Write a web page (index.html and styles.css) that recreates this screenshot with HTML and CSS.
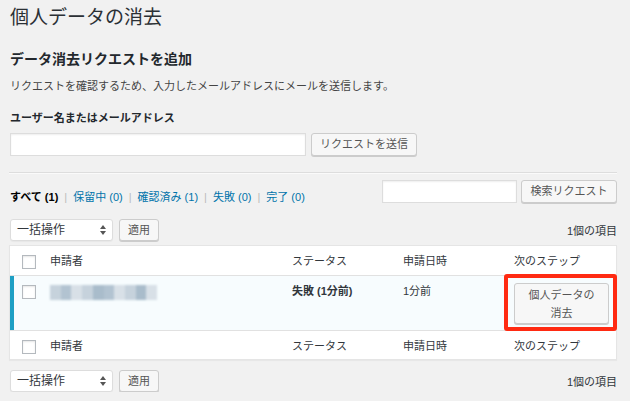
FILE: index.html
```
<!DOCTYPE html>
<html lang="ja">
<head>
<meta charset="utf-8">
<title>個人データの消去</title>
<link rel="stylesheet" href="styles.css">
</head>
<body>
<div class="wrap">
  <h1 class="title">個人データの消去</h1>
  <h2 class="subtitle">データ消去リクエストを追加</h2>
  <p class="desc">リクエストを確認するため、入力したメールアドレスにメールを送信します。</p>
  <div class="label">ユーザー名またはメールアドレス</div>
  <div class="add-row">
    <div class="text-input input-email"></div>
    <button class="btn">リクエストを送信</button>
  </div>
  <div class="sep"></div>
  <div class="filter-row">
    <ul class="subsubsub">
      <li><span class="current">すべて <span class="cnt">(1)</span></span></li>
      <li class="bar">|</li>
      <li><a>保留中 <span class="cnt">(0)</span></a></li>
      <li class="bar">|</li>
      <li><a>確認済み <span class="cnt">(1)</span></a></li>
      <li class="bar">|</li>
      <li><a>失敗 <span class="cnt">(0)</span></a></li>
      <li class="bar">|</li>
      <li><a>完了 <span class="cnt">(0)</span></a></li>
    </ul>
    <div class="search-box">
      <div class="text-input input-search"></div>
      <button class="btn btn-search">検索リクエスト</button>
    </div>
  </div>
  <div class="tablenav tablenav-top">
    <div class="actions">
      <div class="select">一括操作<svg class="arrows" width="6" height="10" viewBox="0 0 6 10"><path d="M0 4L3 0L6 4Z M0 6L3 10L6 6Z" fill="#555"/></svg></div>
      <button class="btn btn-apply">適用</button>
    </div>
    <div class="count">1個の項目</div>
  </div>
  <table class="list">
    <colgroup>
      <col class="c-check"><col class="c-title"><col class="c-status"><col class="c-date"><col>
    </colgroup>
    <thead>
      <tr>
        <th class="check"><span class="cb"></span></th>
        <th>申請者</th>
        <th>ステータス</th>
        <th>申請日時</th>
        <th>次のステップ</th>
      </tr>
    </thead>
    <tbody>
      <tr class="row-active">
        <td class="check"><span class="cb"></span></td>
        <td><span class="blur"><i class="b1"></i><i class="b2"></i><i class="b3"></i><i class="b1"></i><i class="b4"></i><i class="b2"></i><i class="b3"></i><i class="b1"></i><i class="b4"></i><i class="b3"></i></span></td>
        <td class="strong">失敗 (1分前)</td>
        <td>1分前</td>
        <td class="next"><button class="btn btn-erase">個人データの<br>消去</button></td>
      </tr>
    </tbody>
    <tfoot>
      <tr>
        <th class="check"><span class="cb"></span></th>
        <th>申請者</th>
        <th>ステータス</th>
        <th>申請日時</th>
        <th>次のステップ</th>
      </tr>
    </tfoot>
  </table>
  <div class="tablenav tablenav-bottom">
    <div class="actions">
      <div class="select">一括操作<svg class="arrows" width="6" height="10" viewBox="0 0 6 10"><path d="M0 4L3 0L6 4Z M0 6L3 10L6 6Z" fill="#555"/></svg></div>
      <button class="btn btn-apply">適用</button>
    </div>
    <div class="count">1個の項目</div>
  </div>
</div>
</body>
</html>
```
FILE: styles.css
```
* { box-sizing: border-box; }
body {
  margin: 0;
  background: #f1f1f1;
  font-family: "Liberation Sans", "Noto Sans CJK JP", sans-serif;
  color: #23282d;
  font-size: 11px;
}
.wrap { padding: 5px 13px 0 9px; }
.title { font-size: 19px; font-weight: 400; line-height: 25px; margin: 0 0 0 1px; color: #2b3035; }
.subtitle { font-size: 14px; font-weight: 700; line-height: 20px; margin: 19px 0 0 1px; }
.desc { margin: 9px 0 0 1px; line-height: 16px; color: #444; }
.label { margin: 16px 0 0 1px; line-height: 16px; font-weight: 700; }
.add-row { display: flex; gap: 5px; margin: 7px 0 0 1px; }
.text-input {
  height: 23px;
  background: #fff;
  border: 1px solid #ddd;
  box-shadow: inset 0 1px 2px rgba(0,0,0,.07);
}
.input-email { width: 296px; }
.btn {
  height: 23px;
  padding: 0 8px;
  background: #f7f7f7;
  border: 1px solid #ccc;
  border-radius: 3px;
  box-shadow: 0 1px 0 #ccc;
  color: #555;
  font: inherit;
  font-size: 11px;
  line-height: 21px;
}
.sep { border-top: 1px solid #ddd; border-bottom: 1px solid #fafafa; margin-top: 16px; }
.filter-row { display: flex; justify-content: space-between; align-items: flex-start; margin-top: 6px; }
.subsubsub { list-style: none; margin: 9px 0 0 1px; padding: 0; display: flex; line-height: 16px; }
.subsubsub a { color: #0073aa; }
.current { color: #000; font-weight: 700; }
.subsubsub a .cnt { color: #0073aa; }
.bar { color: #bbb; padding: 0 6px; }
.search-box { display: flex; gap: 4px; }
.input-search { width: 135px; }
.btn-search { width: 96px; padding: 0; }
.tablenav { display: flex; justify-content: space-between; align-items: center; margin-top: 14px; height: 22px; }
.tablenav-bottom { margin-top: 10px; }
.actions { display: flex; gap: 6px; margin-left: 1px; }
.select {
  width: 103px;
  height: 22px;
  background: #fff;
  border: 1px solid #ddd;
  border-radius: 3px;
  box-shadow: 0 1px 1px rgba(0,0,0,.04);
  padding: 0 6px;
  line-height: 20px;
  color: #32373c;
  font-size: 12px;
  display: flex;
  justify-content: space-between;
  align-items: center;
}
.btn-apply { width: 40px; height: 22px; padding: 0; line-height: 20px; }
.count { color: #32373c; }
.list {
  width: 100%;
  margin-top: 4px;
  border-spacing: 0;
  table-layout: fixed;
  background: #fff;
  border: 1px solid #e5e5e5;
  box-shadow: 0 1px 1px rgba(0,0,0,.04);
  color: #32373c;
}
.c-check { width: 32px; }
.c-title { width: 242px; }
.c-status { width: 111px; }
.c-date { width: 111px; }
.list th, .list td {
  text-align: left;
  font-weight: 400;
  vertical-align: top;
  padding: 8px 8px 7px;
  line-height: 14px;
}
.list thead th { border-bottom: 1px solid #e1e1e1; }
.list tfoot th { border-top: 1px solid #e1e1e1; padding-bottom: 6px; }
.list .check { padding: 9px 0 0 12px; }
.cb {
  display: block;
  width: 14px;
  height: 14px;
  border: 1px solid #b4b9be;
  background: #fff;
  box-shadow: inset 0 1px 2px rgba(0,0,0,.1);
}
.row-active td { background: #f7fcfe; }
.row-active td.check { box-shadow: inset 4px 0 0 #1e9fc4; padding-top: 9px; }
.row-active td { padding-top: 8px; }
.list td.strong { font-weight: 700; }
.blur { display: flex; width: 107px; height: 15px; margin-top: 1px; filter: blur(1.2px); }
.blur i { flex: 1; }
.b1 { background: #c6d2dc; }
.b2 { background: #b2c3d1; }
.b3 { background: #d8e0e7; }
.b4 { background: #a9bccb; }
.list td.next { position: relative; padding: 7px 8px 6px; }
.list td.next::after {
  content: "";
  position: absolute;
  top: -2px; left: -2px; right: -1px; bottom: -1px;
  border: 4px solid #ff2a12;
  border-radius: 3px;
}
.btn-erase { width: 95px; height: 41px; line-height: 18px; padding: 1px 4px; }
```
